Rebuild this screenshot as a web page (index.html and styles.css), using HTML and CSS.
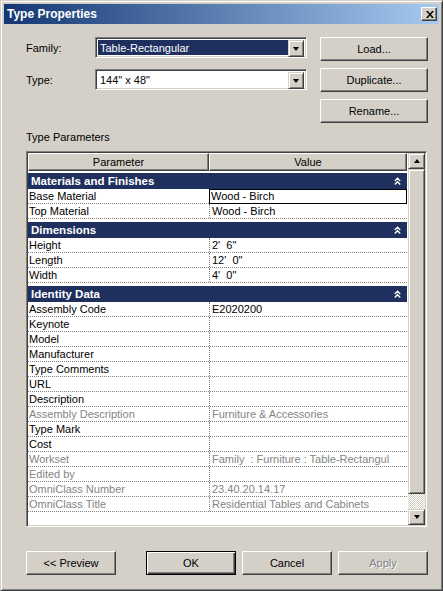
FILE: index.html
```html
<!DOCTYPE html>
<html lang="en">
<head>
<meta charset="utf-8">
<title>Type Properties</title>
<link rel="stylesheet" href="styles.css">
</head>
<body>
<div class="window">
  <div class="titlebar">
    <span class="title">Type Properties</span>
    <span class="close">
      <svg width="8" height="7" viewBox="0 0 8 7"><path d="M0 0h2l2 2.5L6 0h2L5 3.5 8 7H6L4 4.5 2 7H0l3-3.5z" fill="#000"/></svg>
    </span>
  </div>
  <div class="content">
    <div class="top">
      <div class="fields">
        <div class="field">
          <span class="label">Family:</span>
          <div class="combo">
            <span class="combo-text selected">Table-Rectangular</span>
            <span class="combo-btn"><span class="arrow-down"></span></span>
          </div>
        </div>
        <div class="field">
          <span class="label">Type:</span>
          <div class="combo">
            <span class="combo-text">144" x 48"</span>
            <span class="combo-btn"><span class="arrow-down"></span></span>
          </div>
        </div>
      </div>
      <div class="side-buttons">
        <span class="btn">Load...</span>
        <span class="btn">Duplicate...</span>
        <span class="btn">Rename...</span>
      </div>
    </div>

    <div class="section-label">Type Parameters</div>

    <div class="table">
      <div class="list">
        <div class="head">
          <div class="hcell hparam">Parameter</div>
          <div class="hcell hvalue">Value</div>
        </div>

        <div class="group first"><span>Materials and Finishes</span><svg class="chev" width="7" height="8" viewBox="0 0 7 8"><path d="M0.8 4 3.5 1.3 6.2 4M0.8 7.5 3.5 4.8 6.2 7.5" fill="none" stroke="#fff" stroke-width="1.4"/></svg></div>
        <div class="row"><div class="pcell">Base Material</div><div class="vcell focus">Wood - Birch</div></div>
        <div class="row"><div class="pcell">Top Material</div><div class="vcell">Wood - Birch</div></div>

        <div class="group"><span>Dimensions</span><svg class="chev" width="7" height="8" viewBox="0 0 7 8"><path d="M0.8 4 3.5 1.3 6.2 4M0.8 7.5 3.5 4.8 6.2 7.5" fill="none" stroke="#fff" stroke-width="1.4"/></svg></div>
        <div class="row"><div class="pcell">Height</div><div class="vcell">2'&nbsp; 6"</div></div>
        <div class="row"><div class="pcell">Length</div><div class="vcell">12'&nbsp; 0"</div></div>
        <div class="row"><div class="pcell">Width</div><div class="vcell">4'&nbsp; 0"</div></div>

        <div class="group"><span>Identity Data</span><svg class="chev" width="7" height="8" viewBox="0 0 7 8"><path d="M0.8 4 3.5 1.3 6.2 4M0.8 7.5 3.5 4.8 6.2 7.5" fill="none" stroke="#fff" stroke-width="1.4"/></svg></div>
        <div class="row"><div class="pcell">Assembly Code</div><div class="vcell">E2020200</div></div>
        <div class="row"><div class="pcell">Keynote</div><div class="vcell"></div></div>
        <div class="row"><div class="pcell">Model</div><div class="vcell"></div></div>
        <div class="row"><div class="pcell">Manufacturer</div><div class="vcell"></div></div>
        <div class="row"><div class="pcell">Type Comments</div><div class="vcell"></div></div>
        <div class="row"><div class="pcell">URL</div><div class="vcell"></div></div>
        <div class="row"><div class="pcell">Description</div><div class="vcell"></div></div>
        <div class="row ro"><div class="pcell">Assembly Description</div><div class="vcell">Furniture &amp; Accessories</div></div>
        <div class="row"><div class="pcell">Type Mark</div><div class="vcell"></div></div>
        <div class="row"><div class="pcell">Cost</div><div class="vcell"></div></div>
        <div class="row ro"><div class="pcell">Workset</div><div class="vcell">Family&nbsp; : Furniture : Table-Rectangul</div></div>
        <div class="row ro"><div class="pcell">Edited by</div><div class="vcell"></div></div>
        <div class="row ro"><div class="pcell">OmniClass Number</div><div class="vcell">23.40.20.14.17</div></div>
        <div class="row ro"><div class="pcell">OmniClass Title</div><div class="vcell">Residential Tables and Cabinets</div></div>
      </div>
      <div class="vscroll">
        <span class="sbtn"><span class="arrow-up"></span></span>
        <span class="thumb"></span>
        <span class="track"></span>
        <span class="sbtn"><span class="arrow-down"></span></span>
      </div>
    </div>

    <div class="footer">
      <span class="btn wide">&lt;&lt; Preview</span>
      <div class="footer-right">
        <span class="btn wide default">OK</span>
        <span class="btn wide">Cancel</span>
        <span class="btn wide disabled">Apply</span>
      </div>
    </div>
  </div>
</div>
</body>
</html>
```

FILE: styles.css
```css
* { box-sizing: border-box; }

html, body {
  margin: 0;
  padding: 0;
  background: #d4d0c8;
}

body {
  font-family: "Liberation Sans", Arial, sans-serif;
  font-size: 11px;
  color: #000;
}

.window {
  width: 443px;
  height: 591px;
  background: #d4d0c8;
  border: 1px solid;
  border-color: #d4d0c8 #404040 #404040 #d4d0c8;
  box-shadow: inset 1px 1px #fff, inset -1px -1px #808080;
  padding: 3px;
  display: flex;
  flex-direction: column;
}

.titlebar {
  height: 20px;
  margin-bottom: 1px;
  background: linear-gradient(to right, #143774, #a6caf0);
  display: flex;
  align-items: center;
  justify-content: space-between;
  padding: 0 2px 0 3px;
}

.title {
  color: #fff;
  font-weight: bold;
  font-size: 12px;
}

.close {
  width: 16px;
  height: 14px;
  background: #d4d0c8;
  border: 1px solid;
  border-color: #fff #404040 #404040 #fff;
  box-shadow: inset -1px -1px #808080;
  display: flex;
  align-items: center;
  justify-content: center;
  padding-left: 1px;
}

.content {
  flex: 1;
  padding: 12px 11px 12px 22px;
  display: flex;
  flex-direction: column;
}

.top {
  display: flex;
  gap: 13px;
}

.fields {
  width: 281px;
  display: flex;
  flex-direction: column;
  gap: 11px;
}

.field {
  display: flex;
  align-items: center;
  height: 21px;
}

.label {
  width: 69px;
}

.combo {
  width: 212px;
  height: 21px;
  background: #fff;
  border: 1px solid;
  border-color: #808080 #fff #fff #808080;
  box-shadow: inset 1px 1px #404040, inset -1px -1px #d4d0c8;
  padding: 2px;
  display: flex;
}

.combo-text {
  flex: 1;
  line-height: 17px;
  padding-left: 2px;
  white-space: nowrap;
}

.combo-text.selected {
  background: #1f305f;
  color: #fff;
}

.combo-btn {
  width: 16px;
  height: 17px;
  background: #d4d0c8;
  border: 1px solid;
  border-color: #d4d0c8 #404040 #404040 #d4d0c8;
  box-shadow: inset 1px 1px #fff, inset -1px -1px #808080;
  display: flex;
  align-items: center;
  justify-content: center;
}

.arrow-down {
  width: 0;
  height: 0;
  border-left: 3.5px solid transparent;
  border-right: 3.5px solid transparent;
  border-top: 4px solid #000;
}

.arrow-up {
  width: 0;
  height: 0;
  border-left: 3.5px solid transparent;
  border-right: 3.5px solid transparent;
  border-bottom: 4px solid #000;
}

.side-buttons {
  width: 108px;
  display: flex;
  flex-direction: column;
  gap: 7px;
}

.btn {
  height: 24px;
  background: #d4d0c8;
  border: 1px solid;
  border-color: #fff #404040 #404040 #fff;
  box-shadow: inset -1px -1px #808080, inset 1px 1px #d4d0c8;
  display: flex;
  align-items: center;
  justify-content: center;
  white-space: nowrap;
}

.btn.wide {
  width: 90px;
}

.btn.default {
  border: 1px solid #000;
  box-shadow: inset 1px 1px #fff, inset -1px -1px #404040, inset -2px -2px #808080;
}

.btn.disabled {
  color: #808080;
  text-shadow: 1px 1px #fff;
}

.section-label {
  margin-top: 8px;
  line-height: 13px;
  height: 13px;
}

.table {
  margin-top: 7px;
  width: 401px;
  height: 376px;
  border: 1px solid;
  border-color: #808080 #fff #fff #808080;
  box-shadow: inset 1px 1px #404040, inset -1px -1px #d4d0c8;
  padding: 1px;
  display: flex;
  background: #fff;
}

.list {
  width: 380px;
  background: #fff;
}

.head {
  display: flex;
  height: 18px;
}

.hcell {
  height: 18px;
  background: #d4d0c8;
  border: 1px solid;
  border-color: #fff #404040 #404040 #fff;
  box-shadow: inset -1px -1px #808080;
  display: flex;
  align-items: center;
  justify-content: center;
}

.hparam { width: 181px; }
.hvalue { width: 198px; }

.group {
  height: 16px;
  margin-top: 3px;
  width: 379px;
  background: #1f305f;
  color: #fff;
  font-weight: bold;
  font-size: 11.5px;
  display: flex;
  align-items: center;
  justify-content: space-between;
  padding: 0 6px 0 3px;
}

.group.first { margin-top: 2px; }

.row {
  display: flex;
  height: 15px;
  width: 379px;
  border-bottom: 1px dotted #808080;
}

.pcell {
  width: 182px;
  border-right: 1px dotted #808080;
  padding-left: 1px;
  line-height: 14px;
  white-space: nowrap;
}

.vcell {
  flex: 1;
  padding-left: 2px;
  line-height: 14px;
  white-space: nowrap;
  overflow: hidden;
}

.vcell.focus {
  border: 1px solid #000;
  line-height: 12px;
  padding-left: 1px;
  margin-left: -1px;
  margin-bottom: -1px;
  height: 15px;
}

.row.ro .pcell,
.row.ro .vcell {
  color: #858585;
}

.vscroll {
  width: 17px;
  display: flex;
  flex-direction: column;
  background: #d4d0c8;
}

.sbtn {
  height: 16px;
  background: #d4d0c8;
  border: 1px solid;
  border-color: #d4d0c8 #404040 #404040 #d4d0c8;
  box-shadow: inset 1px 1px #fff, inset -1px -1px #808080;
  display: flex;
  align-items: center;
  justify-content: center;
}

.thumb {
  flex: 1;
  background: #d4d0c8;
  border: 1px solid;
  border-color: #d4d0c8 #404040 #404040 #d4d0c8;
  box-shadow: inset 1px 1px #fff, inset -1px -1px #808080;
}

.track {
  height: 15px;
  background-color: #fff;
  background-image: repeating-conic-gradient(#d4d0c8 0 25%, #fff 0 50%);
  background-size: 2px 2px;
}

.footer {
  margin-top: 24px;
  width: 402px;
  display: flex;
  justify-content: space-between;
}

.footer-right {
  display: flex;
  gap: 6px;
}
```
